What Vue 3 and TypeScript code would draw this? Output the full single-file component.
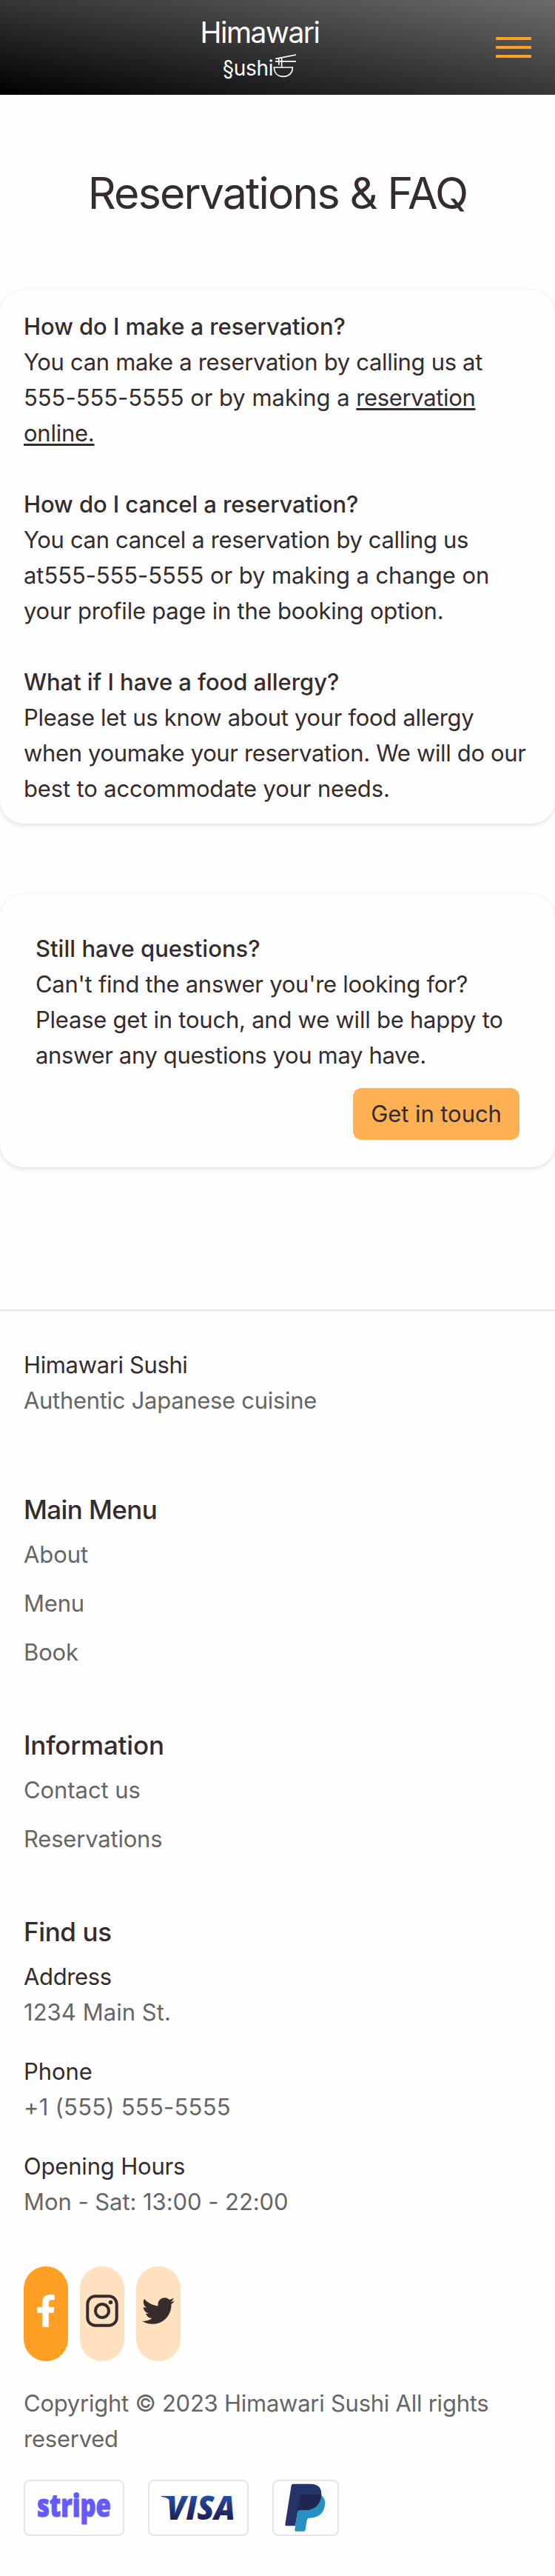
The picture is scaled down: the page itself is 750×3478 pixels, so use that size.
<script setup lang="ts">
interface Line {
  text: string
  track: number
  link?: { text: string; track: number }
}
interface Faq {
  title: Line
  lines: Line[]
}

const faqs: Faq[] = [
  {
    title: { text: 'How do I make a reservation?', track: -0.06 },
    lines: [
      { text: 'You can make a reservation by calling us at', track: -0.32 },
      { text: '555-555-5555 or by making a ', track: -0.04, link: { text: 'reservation', track: -0.36 } },
      { text: '', track: 0, link: { text: 'online.', track: -0.24 } },
    ],
  },
  {
    title: { text: 'How do I cancel a reservation?', track: -0.09 },
    lines: [
      { text: 'You can cancel a reservation by calling us', track: -0.345 },
      { text: 'at555-555-5555 or by making a change on', track: -0.085 },
      { text: 'your profile page in the booking option.', track: -0.22 },
    ],
  },
  {
    title: { text: 'What if I have a food allergy?', track: -0.06 },
    lines: [
      { text: 'Please let us know about your food allergy', track: -0.31 },
      { text: 'when youmake your reservation. We will do our', track: -0.35 },
      { text: 'best to accommodate your needs.', track: -0.16 },
    ],
  },
]

const contact: Line[] = [
  { text: "Can't find the answer you're looking for?", track: -0.27 },
  { text: 'Please get in touch, and we will be happy to', track: -0.24 },
  { text: 'answer any questions you may have.', track: -0.36 },
]

const menus: { title: Line; items: Line[] }[] = [
  {
    title: { text: 'Main Menu', track: -0.6 },
    items: [
      { text: 'About', track: -0.1 },
      { text: 'Menu', track: -0.2 },
      { text: 'Book', track: -0.14 },
    ],
  },
  {
    title: { text: 'Information', track: -0.2 },
    items: [
      { text: 'Contact us', track: -0.06 },
      { text: 'Reservations', track: -0.2 },
    ],
  },
]

const details: { label: Line; value: Line }[] = [
  { label: { text: 'Address', track: -0.36 }, value: { text: '1234 Main St.', track: 0.05 } },
  { label: { text: 'Phone', track: -0.04 }, value: { text: '+1 (555) 555-5555', track: 0.23 } },
  { label: { text: 'Opening Hours', track: -0.18 }, value: { text: 'Mon - Sat: 13:00 - 22:00', track: -0.06 } },
]

const copyright: Line[] = [
  { text: 'Copyright © 2023 Himawari Sushi All rights', track: -0.25 },
  { text: 'reserved', track: -0.23 },
]

const tracking = (line: { track: number }) => ({ letterSpacing: `${line.track}px` })
</script>

<template>
  <div class="page">
    <header class="header">
      <a class="brand">
        <span class="brand-name">Himawari</span>
        <span class="brand-sub">
          <span class="brand-sushi">§ushi</span>
          <svg class="bowl" viewBox="357 186 96 99" fill="none" stroke="#fff" stroke-width="5">
            <path d="M367 208 450 192M366 218.500H450M380.500 206V233M392 204V242" />
            <path d="M361 243H436C436 267 420 280 399 280C377 280 362 267 361 243Z" />
          </svg>
        </span>
      </a>
      <button class="burger" aria-label="Menu"><i></i><i></i><i></i></button>
    </header>

    <main>
      <h1>Reservations &amp; FAQ</h1>

      <section class="card faq">
        <article v-for="faq in faqs" :key="faq.title.text">
          <h2 :style="tracking(faq.title)">{{ faq.title.text }}</h2>
          <p v-for="(line, i) in faq.lines" :key="i">
            <span :style="tracking(line)">{{ line.text }}</span><a v-if="line.link" class="link" :style="tracking(line.link)">{{ line.link.text }}</a>
          </p>
        </article>
      </section>

      <section class="card contact">
        <h2 class="contact-title">Still have questions?</h2>
        <p v-for="line in contact" :key="line.text" :style="tracking(line)">{{ line.text }}</p>
        <button class="cta">Get in touch</button>
      </section>
    </main>

    <footer class="footer">
      <div class="about">
        <p class="about-name">Himawari Sushi</p>
        <p class="muted about-tag">Authentic Japanese cuisine</p>
      </div>

      <nav v-for="menu in menus" :key="menu.title.text" class="group">
        <h3 :style="tracking(menu.title)">{{ menu.title.text }}</h3>
        <ul>
          <li v-for="item in menu.items" :key="item.text" class="muted" :style="tracking(item)">{{ item.text }}</li>
        </ul>
      </nav>

      <div class="group">
        <h3 class="find">Find us</h3>
        <dl>
          <div v-for="d in details" :key="d.label.text">
            <dt :style="tracking(d.label)">{{ d.label.text }}</dt>
            <dd class="muted" :style="tracking(d.value)">{{ d.value.text }}</dd>
          </div>
        </dl>
      </div>

      <div class="social">
        <a class="pill active" aria-label="Facebook">
          <svg viewBox="-96 0 512 512" fill="currentColor">
            <path d="M279.140 288l14.220-92.660h-88.910v-60.130c0-25.350 12.420-50.060 52.240-50.060h40.420V6.260S260.430 0 225.360 0c-73.220 0-121.080 44.380-121.080 124.720v70.620H22.890V288h81.390v224h100.170V288z" />
          </svg>
        </a>
        <a class="pill" aria-label="Instagram">
          <svg viewBox="0 0 44 44" fill="none" stroke="currentColor" stroke-width="4">
            <rect x="2.300" y="2.300" width="39.400" height="39.400" rx="10.500" />
            <circle cx="22" cy="22" r="9" />
            <circle cx="33.500" cy="10.500" r="2.700" fill="currentColor" stroke="none" />
          </svg>
        </a>
        <a class="pill" aria-label="Twitter">
          <svg viewBox="0 0 512 512" fill="currentColor">
            <path d="M459.370 151.716c.325 4.548.325 9.097.325 13.645 0 138.720-105.583 298.558-298.558 298.558-59.452 0-114.680-17.219-161.137-47.106 8.447.974 16.568 1.299 25.340 1.299 49.055 0 94.213-16.568 130.274-44.832-46.132-.975-84.792-31.188-98.112-72.772 6.498.974 12.995 1.624 19.818 1.624 9.421 0 18.843-1.300 27.614-3.573-48.081-9.747-84.143-51.980-84.143-102.985v-1.299c13.969 7.797 30.214 12.670 47.431 13.319-28.264-18.843-46.781-51.005-46.781-87.391 0-19.492 5.197-37.360 14.294-52.954 51.655 63.675 129.300 105.258 216.365 109.807-1.624-7.797-2.599-15.918-2.599-24.040 0-57.828 46.782-104.934 104.934-104.934 30.213 0 57.502 12.670 76.670 33.137 23.715-4.548 46.456-13.320 66.599-25.340-7.798 24.366-24.366 44.833-46.132 57.827 21.117-2.273 41.584-8.122 60.426-16.243-14.292 20.791-32.161 39.308-52.628 54.253z" />
          </svg>
        </a>
      </div>

      <div class="copyright">
        <p v-for="line in copyright" :key="line.text" class="muted" :style="tracking(line)">{{ line.text }}</p>
      </div>

      <div class="payments">
        <div class="pay">
          <svg width="132" height="72" viewBox="0 0 132 72">
            <text class="stripe" x="16" y="48" textLength="100" lengthAdjust="spacingAndGlyphs">stripe</text>
          </svg>
        </div>
        <div class="pay">
          <svg width="132" height="72" viewBox="0 0 132 72">
            <defs>
              <linearGradient id="visa" x1="0" y1="20" x2="0" y2="52" gradientUnits="userSpaceOnUse">
                <stop offset="0" stop-color="#264ea3" />
                <stop offset="1" stop-color="#201c55" />
              </linearGradient>
            </defs>
            <path d="M16 20H29L33 34C30 26 25 22 16 21Z" fill="url(#visa)" />
            <text class="visa" x="23" y="51.500" textLength="93" lengthAdjust="spacingAndGlyphs" fill="url(#visa)">VISA</text>
          </svg>
        </div>
        <div class="pay">
          <svg width="86" height="72" viewBox="362 61 258 216">
            <path d="M468 115H550C566 123 574 142 568 164C562 194 540 210 507 210Q498 210 496 219L490 258Q489 264 483 264H451Q446 264 447 258Z" fill="#2790c3" />
            <path d="M441 72H510C543 72 555 89 555 112C553 154 528 178 490 178H468Q460 178 458 187L449 242H412Q407 242 408 236L433 79Q434 72 441 72Z" fill="#253368" />
            <path d="M476 115H555C552 155 528 178 490 178H468Q462 178 458 182L468 121Q469 115 476 115Z" fill="#1f264f" />
          </svg>
        </div>
      </div>
    </footer>
  </div>
</template>

<style>
body {
  margin: 0;
  background: #fefefe;
}
</style>

<style scoped>
.page {
  width: 750px;
  height: 3478px;
  overflow: hidden;
  color: #362b2d;
  font: 420 31px/48px Inter, "Noto Sans", sans-serif;
  white-space: pre;
}
h1, h2, h3, p, ul, dl, dd {
  margin: 0;
  padding: 0;
  list-style: none;
}
button {
  border: 0;
  padding: 0;
  color: inherit;
  font: inherit;
}
.header {
  box-sizing: border-box;
  height: 128px;
  padding: 0 32px;
  display: grid;
  grid-template-columns: 1fr 48px;
  background: linear-gradient(to top right, #000, #6b6b6b);
}
.brand {
  display: flex;
  flex-direction: column;
  align-items: center;
  padding-top: 20px;
  color: #fff;
}
.brand-name {
  font-size: 39px;
  font-weight: 430;
  line-height: 48px;
  letter-spacing: -1.5px;
}
.brand-sub {
  display: flex;
  align-items: flex-start;
  margin-top: 4px;
}
.brand-sushi {
  padding-top: 3px;
  font-size: 28px;
  font-weight: 430;
  line-height: 34px;
  letter-spacing: -0.3px;
}
.bowl {
  width: 32px;
  height: 33px;
}
.burger {
  display: flex;
  flex-direction: column;
  gap: 8px;
  padding-top: 50px;
  background: none;
}
.burger i {
  width: 48px;
  height: 4px;
  border-radius: 1px;
  background: #ff9f24;
}
h1 {
  padding: 97px 0 95px;
  text-align: center;
  font-size: 59px;
  font-weight: 420;
  line-height: 72px;
  letter-spacing: -1.85px;
}
.card {
  border-radius: 32px;
  background: #fefefe;
  box-shadow: 0 2px 6px rgba(0, 0, 0, 0.13);
}
.faq {
  display: flex;
  flex-direction: column;
  gap: 48px;
  padding: 25px 32px 23px;
}
h2 {
  font-size: 31px;
  font-weight: 520;
  line-height: 48px;
}
p {
  height: 48px;
}
.link {
  text-decoration: underline;
  text-decoration-thickness: 3px;
  text-underline-offset: 3px;
  text-decoration-skip-ink: none;
}
.contact {
  display: flex;
  flex-direction: column;
  margin-top: 96px;
  padding: 49px 48px 37px;
}
.contact-title {
  letter-spacing: 0.02px;
}
.cta {
  align-self: flex-end;
  width: 225px;
  height: 70px;
  margin-top: 20px;
  border-radius: 12px;
  background: #ffb052;
  letter-spacing: -0.06px;
}
.footer {
  margin-top: 192px;
  padding: 49px 32px 0;
  border-top: 2px solid #e5e5e5;
}
.muted {
  color: #666;
}
.about {
  padding-bottom: 22px;
}
.about-name {
  letter-spacing: -0.37px;
}
.about-tag {
  letter-spacing: -0.3px;
}
.group {
  padding-top: 73px;
}
h3 {
  margin-bottom: 9px;
  font-size: 35px;
  font-weight: 520;
  line-height: 56px;
}
.find {
  letter-spacing: -0.38px;
}
ul {
  display: flex;
  flex-direction: column;
  gap: 18px;
}
dl {
  display: flex;
  flex-direction: column;
  gap: 32px;
}
.social {
  display: flex;
  gap: 16px;
  margin: 63px 0 33px;
}
.pill {
  box-sizing: border-box;
  width: 60px;
  height: 128px;
  padding: 38px 8px 0;
  border-radius: 30px;
  background: #ffe1bf;
}
.pill.active {
  background: #ff9f24;
  color: #fff;
}
.pill svg {
  display: block;
  width: 44px;
  height: 44px;
}
.payments {
  display: flex;
  gap: 32px;
  margin-top: 31px;
}
.pay {
  border: 2px solid #e5e5e9;
  border-radius: 8px;
}
.pay svg {
  display: block;
  overflow: visible;
}
.stripe {
  font: 800 43px "Open Sans", sans-serif;
  fill: #635bff;
  stroke: #635bff;
  stroke-width: 1px;
}
.visa {
  font: italic 800 44px "Open Sans", sans-serif;
}
</style>
